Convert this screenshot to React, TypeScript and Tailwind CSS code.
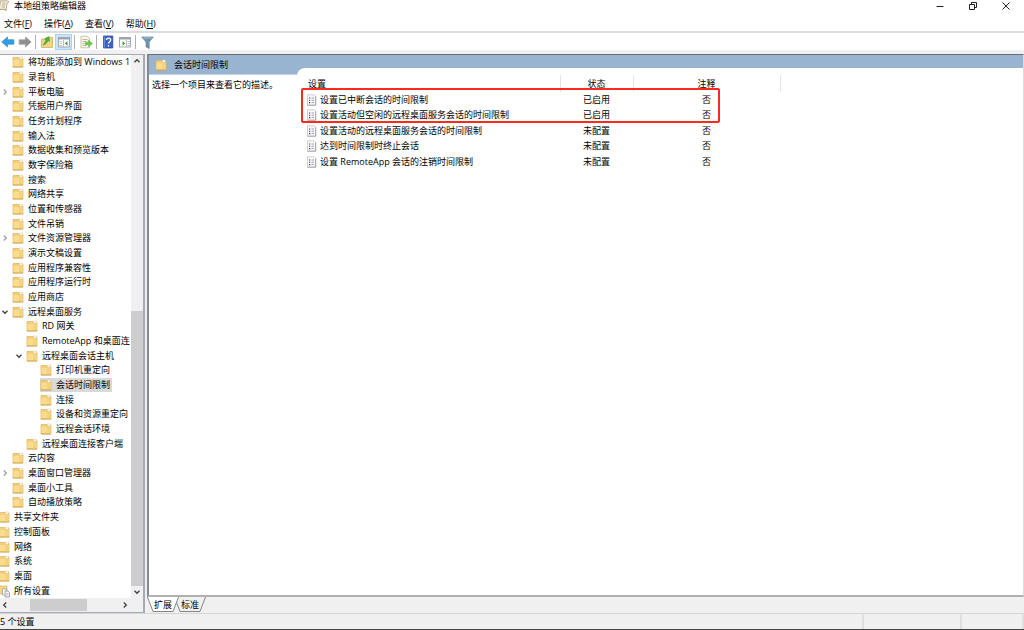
import { ReactNode, useState } from "react";

interface TreeItem {
  label: string;
  level: 0 | 1 | 2 | 3;
  state?: "open" | "closed";
  icon?: "all";
}

const TREE: TreeItem[] = [
  { label: "将功能添加到 Windows 1", level: 1 },
  { label: "录音机", level: 1 },
  { label: "平板电脑", level: 1, state: "closed" },
  { label: "凭据用户界面", level: 1 },
  { label: "任务计划程序", level: 1 },
  { label: "输入法", level: 1 },
  { label: "数据收集和预览版本", level: 1 },
  { label: "数字保险箱", level: 1 },
  { label: "搜索", level: 1 },
  { label: "网络共享", level: 1 },
  { label: "位置和传感器", level: 1 },
  { label: "文件吊销", level: 1 },
  { label: "文件资源管理器", level: 1, state: "closed" },
  { label: "演示文稿设置", level: 1 },
  { label: "应用程序兼容性", level: 1 },
  { label: "应用程序运行时", level: 1 },
  { label: "应用商店", level: 1 },
  { label: "远程桌面服务", level: 1, state: "open" },
  { label: "RD 网关", level: 2 },
  { label: "RemoteApp 和桌面连", level: 2 },
  { label: "远程桌面会话主机", level: 2, state: "open" },
  { label: "打印机重定向", level: 3 },
  { label: "会话时间限制", level: 3 },
  { label: "连接", level: 3 },
  { label: "设备和资源重定向", level: 3 },
  { label: "远程会话环境", level: 3 },
  { label: "远程桌面连接客户端", level: 2 },
  { label: "云内容", level: 1 },
  { label: "桌面窗口管理器", level: 1, state: "closed" },
  { label: "桌面小工具", level: 1 },
  { label: "自动播放策略", level: 1 },
  { label: "共享文件夹", level: 0 },
  { label: "控制面板", level: 0 },
  { label: "网络", level: 0 },
  { label: "系统", level: 0 },
  { label: "桌面", level: 0 },
  { label: "所有设置", level: 0, icon: "all" },
];

const INDENT = ["-ml-[2px]", "", "pl-[14px]", "pl-[28px]"];

const SETTINGS = [
  { name: "设置已中断会话的时间限制", state: "已启用", comment: "否" },
  { name: "设置活动但空闲的远程桌面服务会话的时间限制", state: "已启用", comment: "否" },
  { name: "设置活动的远程桌面服务会话的时间限制", state: "未配置", comment: "否" },
  { name: "达到时间限制时终止会话", state: "未配置", comment: "否" },
  { name: "设置 RemoteApp 会话的注销时间限制", state: "未配置", comment: "否" },
];

const MENUS = [
  { label: "文件", hotkey: "F" },
  { label: "操作", hotkey: "A" },
  { label: "查看", hotkey: "V" },
  { label: "帮助", hotkey: "H" },
];

function FolderIcon() {
  return (
    <svg className="w-3 h-3 shrink-0" viewBox="0 0 12 12">
      <path d="M1 1.500h6l.8 1H11V11H1z" fill="#f3cf7c" stroke="#dcb25a" strokeWidth=".7" />
      <path d="M7.300 1h3.200v2.300H7.300z" fill="#fffaf0" stroke="#d8bd88" strokeWidth=".5" />
      <path d="M1.500 4h9v6.500h-9z" fill="#f9dc90" />
      <path d="M7 4h3.500v6.500H7z" fill="#f5d27c" />
      <path d="M.8 11h10.400" stroke="#c99f4a" strokeWidth=".8" />
    </svg>
  );
}

function AllSettingsIcon() {
  return (
    <svg className="w-3 h-3 shrink-0 overflow-visible" viewBox="0 0 12 12">
      <path d="M0 1h9v8H0z" fill="#f7d684" stroke="#dcb25a" strokeWidth=".7" />
      <path d="M4.500 4h4v6h-4z" fill="#fff" stroke="#9aa0a8" strokeWidth=".8" />
      <path d="M7 6h3l1.500 1.500V12H7z" fill="#f4f6f9" stroke="#8d939c" strokeWidth=".8" />
      <path d="M8 8.500h2.500M8 10.200h2.500" stroke="#9aa6b8" strokeWidth=".6" />
    </svg>
  );
}

function PolicyIcon() {
  return (
    <svg className="w-[11px] h-3 shrink-0" viewBox="0 0 11 12">
      <path d="M1.500.8h6.700l1.500 1.500v8.900H1.500z" fill="#fafafa" stroke="#c4c4c4" strokeWidth=".8" />
      <path d="M1.500 11.200h8.200V2.500" fill="none" stroke="#9a9a9a" strokeWidth=".8" />
      <path d="M3 4h1.200M3 6.300h1.200M3 8.600h1.200" stroke="#34363f" strokeWidth="1.100" />
      <path d="M5.500 4H8M5.500 6.300H8M5.500 8.600H8" stroke="#8389a8" strokeWidth=".8" />
    </svg>
  );
}

function ScrollIcon() {
  return (
    <svg className="w-3 h-3 shrink-0" viewBox="0 0 12 12">
      <path d="M2.500.8h7.200c1 0 1.500 1.700.3 2H9l-.8 6.700H1.200z" fill="#fbf4dc" stroke="#a89a78" strokeWidth=".8" />
      <path d="M.5 9.300h7c-.2 1.700.8 2 1.300.5" fill="#ecdcae" stroke="#a89a78" strokeWidth=".8" />
      <path d="M4 3h3.500M3.800 5h3.500M3.500 7H7" stroke="#8f8a86" strokeWidth=".7" />
    </svg>
  );
}

function Chevron({ dir, className = "text-[#404040]" }: { dir: "up" | "down" | "left" | "right"; className?: string }) {
  const paths = {
    up: "M1.500 5.200 4 2.700l2.500 2.500",
    down: "M1.500 2.800 4 5.300l2.500-2.500",
    left: "M5.200 1.500 2.700 4l2.500 2.500",
    right: "M2.800 1.500 5.300 4 2.800 6.500",
  };
  return (
    <svg className={`w-2 h-2 ${className}`} viewBox="0 0 8 8" fill="none" stroke="currentColor" strokeWidth="1.300">
      <path d={paths[dir]} />
    </svg>
  );
}

function ToolButton({ label, active, children }: { label: string; active?: boolean; children: ReactNode }) {
  return (
    <button
      type="button"
      aria-label={label}
      className={`w-[17px] h-4 flex items-center justify-center ${active ? "bg-[#cce4f7] outline outline-1 -outline-offset-1 outline-[#a6d2f5]" : ""}`}
    >
      <svg className="w-[14px] h-[14px]" viewBox="0 0 14 14">
        {children}
      </svg>
    </button>
  );
}

function Separator() {
  return <span className="w-px h-[14px] mx-[2px] bg-[#b0b0b0]" />;
}

function TitleBar() {
  return (
    <header className="flex items-start justify-between h-4 bg-white">
      <div className="flex items-center h-3 gap-[2px]">
        <span className="-ml-[2px] w-[14px] flex">
          <ScrollIcon />
        </span>
        <h1>本地组策略编辑器</h1>
      </div>
      <div className="flex h-[11px] pr-[2px] text-[#222]">
        <button type="button" aria-label="最小化" className="w-[33px] flex items-center justify-center">
          <svg className="w-[10px] h-[10px]" viewBox="0 0 10 10" stroke="currentColor" fill="none">
            <path d="M1.500 5.500h7" />
          </svg>
        </button>
        <button type="button" aria-label="向下还原" className="w-[33px] flex items-center justify-center">
          <svg className="w-[10px] h-[10px]" viewBox="0 0 10 10" stroke="currentColor" fill="none">
            <path d="M1.500 3.500h5v5h-5zM3.500 3V1.500h5v5H7" />
          </svg>
        </button>
        <button type="button" aria-label="关闭" className="w-[33px] flex items-center justify-center">
          <svg className="w-[10px] h-[10px]" viewBox="0 0 10 10" stroke="currentColor" fill="none">
            <path d="m1.500 1.500 7 7M8.500 1.500l-7 7" />
          </svg>
        </button>
      </div>
    </header>
  );
}

function Toolbar() {
  return (
    <div role="toolbar" className="flex items-center h-[17px] -ml-px bg-white">
      <ToolButton label="后退">
        <path d="M.8 7 6.500 2v2.800h6.300v4.400H6.500V12z" fill="#2d9fe8" stroke="#3d8fce" strokeWidth=".8" />
      </ToolButton>
      <ToolButton label="前进">
        <path d="M13.200 7 7.500 2v2.800H1.200v4.400h6.300V12z" fill="#8f8f8f" stroke="#a0a0a0" strokeWidth=".8" />
      </ToolButton>
      <Separator />
      <ToolButton label="上一级">
        <path d="M1.500 4h4l1-1.500h6v10h-11z" fill="#f3d58a" stroke="#cfae65" strokeWidth=".8" />
        <path d="M3 10c1.200-1.500 2.400-3.300 3-5.300L4.500 4 9 1.500l.5 5L8 5.500C7 8 5.500 9.500 3 10z" fill="#4db437" stroke="#3c9629" strokeWidth=".5" />
      </ToolButton>
      <ToolButton label="显示/隐藏控制台树" active>
        <path d="M1.500 2.500h11v9.500h-11z" fill="#fff" stroke="#9da1a7" strokeWidth=".9" />
        <path d="M1 2h12v2.500H1z" fill="#9ea4ab" />
        <path d="M2.500 6.500h2.500M2.500 8.500h2.500M2.500 10.500h2.500M6.500 5v7" stroke="#a9b1bb" strokeWidth=".8" />
        <path d="M10.500 6v5L7.800 8.500z" fill="#4f9a68" />
      </ToolButton>
      <Separator />
      <ToolButton label="导出列表">
        <path d="M2 1.200h6L10.500 3.500v9.300H2z" fill="#fbf8e6" stroke="#b9b49d" strokeWidth=".8" />
        <path d="M3.500 4.500h5M3.500 6.500h4M3.500 8.500h3M3.500 10.500h4" stroke="#aaa797" strokeWidth=".8" />
        <path d="M6.500 7.300h3V5.200L13.500 8.500 9.500 11.800V9.700h-3z" fill="#6cc850" stroke="#58ab40" strokeWidth=".5" />
      </ToolButton>
      <Separator />
      <ToolButton label="帮助">
        <path d="M2.500 1h9.300v12H2.500z" fill="#3d60c4" stroke="#304b9c" strokeWidth=".8" />
        <path d="M3.300 1.500v11" stroke="#88a3ee" strokeWidth=".8" />
        <path d="M5.500 5c0-2.500 4.200-2.500 4.200 0 0 1.700-2.200 1.700-2.200 3.500M7.500 10v1.500" fill="none" stroke="#fff" strokeWidth="1.300" />
      </ToolButton>
      <ToolButton label="显示/隐藏操作窗格">
        <path d="M1.500 2.500h11v9.500h-11z" fill="#fff" stroke="#9da1a7" strokeWidth=".9" />
        <path d="M1 2h12v2.500H1z" fill="#9ea4ab" />
        <path d="M9.500 6.500H12M9.500 8.500H12M9.500 10.500H12M8.500 5v7" stroke="#a9b1bb" strokeWidth=".8" />
        <path d="M4.500 6v5l2.800-2.500z" fill="#4cac3b" />
      </ToolButton>
      <Separator />
      <ToolButton label="筛选器">
        <path d="M1.700 2h11.600L9.200 7v6.500L6 12V7z" fill="#6f92ae" stroke="#6b8ba5" strokeWidth=".7" />
        <path d="M3.500 3h8" stroke="#b5cbdc" strokeWidth=".8" />
      </ToolButton>
    </div>
  );
}

function Tree() {
  const [selected, setSelected] = useState("会话时间限制");
  return (
    <nav className="w-[145px] shrink-0 flex flex-col bg-[#f0f0f0] border-t border-r-2 border-b border-[#a6a9b6]">
      <div className="flex flex-1 min-h-0">
        <ul role="tree" className="flex-1 min-w-0 overflow-hidden bg-white flex flex-col">
          {TREE.map((item) => (
            <li
              key={item.label}
              role="treeitem"
              aria-selected={selected === item.label}
              className={`flex-1 min-h-0 flex items-center whitespace-nowrap ${INDENT[item.level]}`}
            >
              {item.level > 0 && (
                <span className="w-3 shrink-0 flex items-center pl-px">
                  {item.state && (
                    <button type="button" aria-label={item.state === "open" ? "折叠" : "展开"} className="flex">
                      {item.state === "open" ? <Chevron dir="down" /> : <Chevron dir="right" className="text-[#a0a0a0]" />}
                    </button>
                  )}
                </span>
              )}
              <button
                type="button"
                onClick={() => setSelected(item.label)}
                className={`h-full flex items-center gap-1 pr-[2px] ${selected === item.label ? "bg-[#d9d9d9]" : ""}`}
              >
                {item.icon === "all" ? <AllSettingsIcon /> : <FolderIcon />}
                <span>{item.label}</span>
              </button>
            </li>
          ))}
        </ul>
        <div className="w-3 flex flex-col items-center">
          <button type="button" aria-label="向上滚动" className="h-3 flex items-center">
            <Chevron dir="up" />
          </button>
          <div className="flex-1 w-full flex flex-col justify-end">
            <div className="h-[53%] bg-[#cdcdcd]" />
          </div>
          <button type="button" aria-label="向下滚动" className="h-3 flex items-center">
            <Chevron dir="down" />
          </button>
        </div>
      </div>
      <div className="h-[14px] pr-3 flex items-center">
        <button type="button" aria-label="向左滚动" className="w-3 flex pl-px">
          <Chevron dir="left" />
        </button>
        <div className="flex-1 h-3">
          <div className="w-[57px] h-full ml-[18px] bg-[#cdcdcd]" />
        </div>
        <button type="button" aria-label="向右滚动" className="w-3 flex justify-center">
          <Chevron dir="right" />
        </button>
      </div>
    </nav>
  );
}

function SettingsTable() {
  return (
    <div className="relative w-[483px]">
      <table className="w-full table-fixed border-collapse">
        <colgroup>
          <col className="w-[263px]" />
          <col className="w-[73px]" />
          <col className="w-[147px]" />
        </colgroup>
        <thead>
          <tr className="h-[17px]">
            <th scope="col" className="p-0 pl-[11px] font-normal text-left border-r border-[#e5e5e5]">设置</th>
            <th scope="col" className="p-0 font-normal border-r border-[#e5e5e5]">状态</th>
            <th scope="col" className="p-0 font-normal border-r border-[#e5e5e5]">注释</th>
          </tr>
        </thead>
        <tbody>
          {SETTINGS.map((s) => (
            <tr key={s.name} className="h-[15px] even:h-4">
              <td className="p-0 pl-[9px]">
                <span className="flex items-center gap-[3px] whitespace-nowrap">
                  <PolicyIcon />
                  {s.name}
                </span>
              </td>
              <td className="p-0 text-center">{s.state}</td>
              <td className="p-0 text-center">{s.comment}</td>
            </tr>
          ))}
        </tbody>
      </table>
      {/* highlight round the two enabled policies */}
      <div className="absolute left-1 top-[13px] w-[419px] h-[35px] border-2 border-[#fc2a1c] rounded-[2px] pointer-events-none" />
    </div>
  );
}

function Tab({ label, active }: { label: string; active?: boolean }) {
  return (
    <button type="button" role="tab" aria-selected={!!active} className={`relative w-8 h-[15px] ${active ? "z-10" : "-ml-[5px]"}`}>
      <svg className="absolute inset-0 w-full h-full" viewBox="0 0 32 15">
        <path d="M.5 0 6 14.500h20L31.500 0" fill={active ? "#fff" : "#f0f0f0"} stroke="#777" strokeWidth=".9" />
      </svg>
      <span className="relative">{label}</span>
    </button>
  );
}

function DetailPane() {
  return (
    <main className="flex-1 min-w-0 flex flex-col">
      <section className="flex-1 min-h-0 flex bg-[#99b4d1] border-t border-l-2 border-r border-t-[#6e6e6e] border-l-[#85888f] border-r-[#dcdcdc] border-b-2 border-b-[#b0b0b0]">
        <div className="w-[148px] shrink-0 flex flex-col">
          <h2 className="h-5 shrink-0 flex items-center gap-[7px] pl-[6px] border-b border-[#c3d3e6]">
            <FolderIcon />
            会话时间限制
          </h2>
          <p className="flex-1 bg-white pl-[3px] pt-[3px] whitespace-nowrap">选择一个项目来查看它的描述。</p>
        </div>
        <div className="flex-1 min-w-0 flex flex-col pt-[13px]">
          <div className="flex-1 bg-white rounded-tl-lg pt-[7px]">
            <SettingsTable />
          </div>
        </div>
      </section>
      <div role="tablist" className="h-4 shrink-0 flex">
        <Tab label="扩展" active />
        <Tab label="标准" />
      </div>
    </main>
  );
}

export default function App() {
  return (
    <div className="h-screen flex flex-col overflow-hidden bg-[#f0f0f0] text-black text-[9px] leading-[14px] font-['Open_Sans','Noto_Sans_CJK_SC',sans-serif]">
      <TitleBar />
      <nav className="flex items-center h-[15px] gap-3 pl-1 bg-white">
        {MENUS.map((m) => (
          <button key={m.hotkey} type="button">
            {m.label}(<u>{m.hotkey}</u>)
          </button>
        ))}
      </nav>
      <div className="h-[2px] bg-[#dcdce0]" />
      <Toolbar />
      <div className="flex-1 min-h-0 flex gap-[2px] pt-1">
        <Tree />
        <DetailPane />
      </div>
      <footer className="h-[17px] shrink-0 flex items-stretch border-t border-[#d5d5d5] border-b border-b-[#444]">
        <span className="flex-1 flex items-center">5 个设置</span>
        <span className="w-[98px] border-l-2 border-[#dfdfdf]" />
        <span className="w-16 border-x-2 border-[#dfdfdf]" />
      </footer>
    </div>
  );
}
